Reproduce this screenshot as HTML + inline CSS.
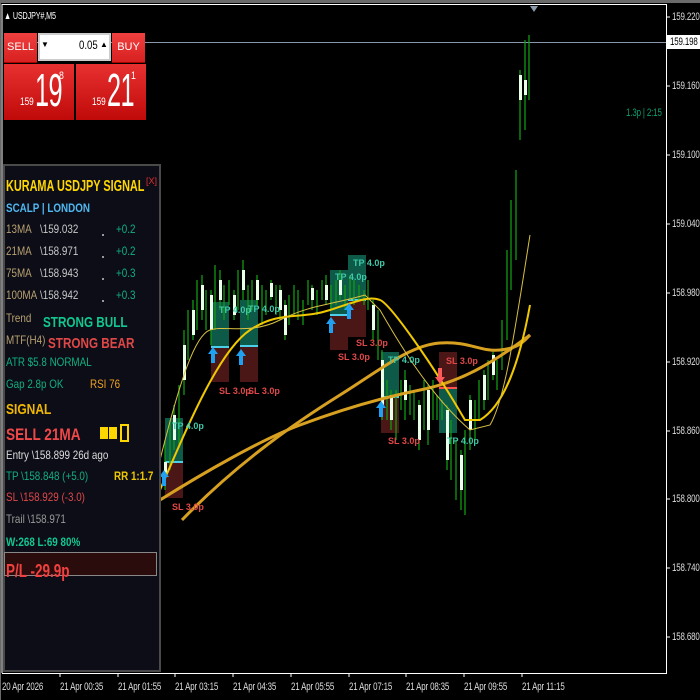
<!DOCTYPE html>
<html><head><meta charset="utf-8"><style>
*{margin:0;padding:0;box-sizing:border-box}
body{width:700px;height:700px;background:#000;overflow:hidden;position:relative;font-family:"Liberation Sans",sans-serif;}
.a{position:absolute;white-space:nowrap}
.ax{position:absolute;color:#ddd;font-size:11px;transform:scaleX(0.72);transform-origin:left top;letter-spacing:-0.2px}
.p{position:absolute;left:6px;font-size:12px;transform:scaleX(0.82);transform-origin:left top;white-space:nowrap}
</style></head><body>
<div class="a" style="left:0;top:0;width:700px;height:3px;background:#6a6a6a"></div>
<div class="a" style="left:0;top:3px;width:1px;height:697px;background:#6a6a6a"></div>
<svg class="a" style="left:0;top:0" width="700" height="700">
<line x1="2" y1="4.5" x2="667" y2="4.5" stroke="#fff"/>
<line x1="666.5" y1="4" x2="666.5" y2="673" stroke="#fff"/>
<line x1="2" y1="673.5" x2="667" y2="673.5" stroke="#fff"/>
<line x1="2" y1="4" x2="2" y2="673" stroke="#fff"/>
<polygon points="530,6 538,6 534,12" fill="#8a9aa8"/>
<line x1="4" y1="42.5" x2="666" y2="42.5" stroke="#8898a8"/>
<g stroke="#fff"><line x1="666" y1="17" x2="670" y2="17"/><line x1="666" y1="86" x2="670" y2="86"/><line x1="666" y1="155" x2="670" y2="155"/><line x1="666" y1="224" x2="670" y2="224"/><line x1="666" y1="293" x2="670" y2="293"/><line x1="666" y1="362" x2="670" y2="362"/><line x1="666" y1="431" x2="670" y2="431"/><line x1="666" y1="499" x2="670" y2="499"/><line x1="666" y1="568" x2="670" y2="568"/><line x1="666" y1="637" x2="670" y2="637"/>
<line x1="60" y1="673" x2="60" y2="677"/><line x1="118" y1="673" x2="118" y2="677"/><line x1="175" y1="673" x2="175" y2="677"/><line x1="233" y1="673" x2="233" y2="677"/><line x1="291" y1="673" x2="291" y2="677"/><line x1="349" y1="673" x2="349" y2="677"/><line x1="406" y1="673" x2="406" y2="677"/><line x1="464" y1="673" x2="464" y2="677"/><line x1="522" y1="673" x2="522" y2="677"/></g>
<g>
<rect x="165" y="418" width="18" height="44" fill="#0d5a48"/><rect x="165" y="462" width="18" height="36" fill="#4a1616"/>
<rect x="211" y="302" width="18" height="45" fill="#0d5a48"/><rect x="211" y="347" width="18" height="35" fill="#4a1616"/>
<rect x="240" y="300" width="18" height="46" fill="#0d5a48"/><rect x="240" y="346" width="18" height="36" fill="#4a1616"/>
<rect x="330" y="270" width="18" height="45" fill="#0d5a48"/><rect x="330" y="315" width="18" height="35" fill="#4a1616"/>
<rect x="348" y="255" width="18" height="45" fill="#0d5a48"/><rect x="348" y="300" width="18" height="37" fill="#4a1616"/>
<rect x="381" y="352" width="18" height="45" fill="#0d5a48"/><rect x="381" y="397" width="18" height="36" fill="#4a1616"/>
<rect x="439" y="352" width="18" height="36" fill="#4a1616"/><rect x="439" y="388" width="18" height="45" fill="#0d5a48"/>
<g stroke="#4ad0e8" stroke-width="2"><line x1="165" y1="462" x2="183" y2="462"/><line x1="211" y1="347" x2="229" y2="347"/><line x1="240" y1="346" x2="258" y2="346"/><line x1="330" y1="315" x2="348" y2="315"/><line x1="348" y1="300" x2="366" y2="300"/><line x1="381" y1="397" x2="399" y2="397"/></g>
<line x1="439" y1="388" x2="457" y2="388" stroke="#ff5050" stroke-width="2"/>
</g>
<path fill="none" stroke="#119a11" stroke-width="1.3" d="M165 440V490M170 420V470M174 405V450M179 385V445M184 330V395M188 310V360M193 300V340M197 280V330M202 275V320M206 290V330M211 290V345M215 265V330M220 270V310M224 285V320M229 280V305M234 290V320M238 270V310M243 260V300M248 285V320M252 280V310M257 275V305M262 285V325M266 290V315M271 280V300M276 285V315M280 285V320M285 300V340M289 295V325M294 285V315M298 290V320M303 300V325M308 280V305M312 285V310M317 290V315M322 280V300M326 275V305M331 285V310M336 280V305M340 270V300M345 285V310M350 275V300M354 280V305M359 285V300M364 290V305M368 280V310M373 300V340M378 310V360M382 350V420M387 380V420M391 390V430M396 390V440M401 380V410M405 370V420M410 385V415M414 390V420M419 400V450M424 380V430M428 385V445M433 380V420M437 395V420M442 400V420M447 405V470M451 420V480M456 440V500M461 450V510M465 430V515M470 395V450M475 400V440M479 380V420M484 370V410M488 360V400M493 350V380M497 360V390M502 320V370M507 250V340M511 200V290M516 170V260M520 70V140M525 40V130M529 35V100"/>
<g fill="#e8ffe8"><rect x="164" y="462" width="3" height="13"/><rect x="173" y="415" width="3" height="25"/><rect x="183" y="345" width="3" height="35"/><rect x="192" y="310" width="3" height="25"/><rect x="201" y="285" width="3" height="25"/><rect x="210" y="295" width="3" height="35"/><rect x="219" y="280" width="3" height="20"/><rect x="233" y="295" width="3" height="20"/><rect x="242" y="270" width="3" height="20"/><rect x="256" y="280" width="3" height="20"/><rect x="270" y="283" width="3" height="14"/><rect x="279" y="290" width="3" height="20"/><rect x="284" y="305" width="3" height="30"/><rect x="311" y="288" width="3" height="12"/><rect x="325" y="285" width="3" height="15"/><rect x="339" y="280" width="3" height="15"/><rect x="372" y="305" width="3" height="25"/><rect x="381" y="360" width="3" height="45"/><rect x="390" y="395" width="3" height="25"/><rect x="404" y="380" width="3" height="20"/><rect x="418" y="405" width="3" height="35"/><rect x="427" y="390" width="3" height="40"/><rect x="446" y="410" width="3" height="50"/><rect x="460" y="455" width="3" height="35"/><rect x="469" y="400" width="3" height="30"/><rect x="483" y="375" width="3" height="25"/><rect x="492" y="355" width="3" height="20"/><rect x="519" y="75" width="3" height="25"/><rect x="524" y="80" width="3" height="15"/></g>
<path d="M160 500 C200 475,260 440,300 425 S380 398,420 390 S490 365,530 335" fill="none" stroke="#d8a020" stroke-width="3"/>
<path d="M182 520 C240 460,300 420,340 395 S410 345,440 343 S480 352,500 350 S525 340,530 335" fill="none" stroke="#d8a020" stroke-width="3"/>
<path d="M160 490 C190 420,220 350,250 330 S300 320,330 310 S370 296,380 300 S430 360,465 420 L480 420 C505 405,520 360,530 305" fill="none" stroke="#f0c800" stroke-width="2"/>
<path d="M160 460 C180 380,195 335,210 330 S250 335,280 320 S330 305,365 295 L380 310 C400 345,430 395,470 430 L490 425 C505 400,515 330,530 235" fill="none" stroke="#d8c040" stroke-width="1"/>
<g fill="#20a0f0"><path d="M164 470 l5 7 h-3 v9 h-4 v-9 h-3z"/><path d="M213 347 l5 7 h-3 v9 h-4 v-9 h-3z"/><path d="M241 349 l5 7 h-3 v9 h-4 v-9 h-3z"/><path d="M331 317 l5 7 h-3 v9 h-4 v-9 h-3z"/><path d="M349 303 l5 7 h-3 v9 h-4 v-9 h-3z"/><path d="M381 401 l5 7 h-3 v9 h-4 v-9 h-3z"/></g>
<path d="M440 384 l5 -7 h-3 v-9 h-4 v9 h-3z" fill="#ff5a5a"/>
<g font-family="Liberation Sans" font-size="9" font-weight="bold">
<g fill="#40c8a8"><text x="172" y="429">TP 4.0p</text><text x="219" y="313">TP 4.0p</text><text x="248" y="312">TP 4.0p</text><text x="335" y="280">TP 4.0p</text><text x="353" y="266">TP 4.0p</text><text x="388" y="363">TP 4.0p</text><text x="447" y="444">TP 4.0p</text></g>
<g fill="#e04848"><text x="172" y="510">SL 3.0p</text><text x="219" y="394">SL 3.0p</text><text x="248" y="394">SL 3.0p</text><text x="338" y="360">SL 3.0p</text><text x="356" y="346">SL 3.0p</text><text x="388" y="444">SL 3.0p</text><text x="446" y="364">SL 3.0p</text></g>
</g>
</svg>
<div class="ax" style="left:672px;top:11px">159.220</div>
<div class="a" style="left:667px;top:35px;width:33px;height:14px;background:#fff"></div>
<div class="ax" style="left:670px;top:36px;color:#000">159.198</div>
<div class="ax" style="left:672px;top:80px">159.160</div>
<div class="ax" style="left:672px;top:149px">159.100</div>
<div class="ax" style="left:672px;top:218px">159.040</div>
<div class="ax" style="left:672px;top:287px">158.980</div>
<div class="ax" style="left:672px;top:356px">158.920</div>
<div class="ax" style="left:672px;top:425px">158.860</div>
<div class="ax" style="left:672px;top:493px">158.800</div>
<div class="ax" style="left:672px;top:562px">158.740</div>
<div class="ax" style="left:672px;top:631px">158.680</div>
<div class="ax" style="left:2px;top:681px">20 Apr 2026</div>
<div class="ax" style="left:60px;top:681px">21 Apr 00:35</div>
<div class="ax" style="left:118px;top:681px">21 Apr 01:55</div>
<div class="ax" style="left:175px;top:681px">21 Apr 03:15</div>
<div class="ax" style="left:233px;top:681px">21 Apr 04:35</div>
<div class="ax" style="left:291px;top:681px">21 Apr 05:55</div>
<div class="ax" style="left:349px;top:681px">21 Apr 07:15</div>
<div class="ax" style="left:406px;top:681px">21 Apr 08:35</div>
<div class="ax" style="left:464px;top:681px">21 Apr 09:55</div>
<div class="ax" style="left:522px;top:681px">21 Apr 11:15</div>
<div class="ax" style="left:626px;top:107px;color:#10a070">1.3p | 2:15</div>
<div class="ax" style="left:4px;top:11px;color:#fff;font-size:10px">▲ USDJPY#,M5</div>
<div class="a" style="left:4px;top:33px;width:33px;height:30px;background:linear-gradient(#f04040,#d82020);color:#fff;font-size:11px;text-align:center;line-height:28px;border-bottom:1px solid #a00">SELL</div>
<div class="a" style="left:38px;top:33px;width:73px;height:28px;background:#fff;border:2px solid #ccc"></div>
<div class="a" style="left:41px;top:40px;font-size:8px;color:#000">▼</div>
<div class="a" style="left:100px;top:40px;font-size:8px;color:#000">▲</div>
<div class="a" style="left:79px;top:38px;font-size:12px;color:#000;transform:scaleX(.8);transform-origin:left">0.05</div>
<div class="a" style="left:112px;top:33px;width:33px;height:30px;background:linear-gradient(#f04040,#d82020);color:#fff;font-size:11px;text-align:center;line-height:28px;border-bottom:1px solid #a00">BUY</div>
<div class="a" style="left:4px;top:64px;width:70px;height:56px;background:linear-gradient(#e83030,#c00a0a)"></div>
<div class="a" style="left:76px;top:64px;width:70px;height:56px;background:linear-gradient(#e83030,#c00a0a)"></div>
<div class="a" style="left:20px;top:96px;color:#fff;font-size:11px;transform:scaleX(.75);transform-origin:left">159</div>
<div class="a" style="left:35px;top:66px;color:#fff;font-size:46px;line-height:48px;transform:scaleX(.55);transform-origin:left;letter-spacing:-1px">19</div>
<div class="a" style="left:59px;top:70px;color:#fff;font-size:11px;transform:scaleX(.8);transform-origin:left">8</div>
<div class="a" style="left:92px;top:96px;color:#fff;font-size:11px;transform:scaleX(.75);transform-origin:left">159</div>
<div class="a" style="left:107px;top:66px;color:#fff;font-size:46px;line-height:48px;transform:scaleX(.55);transform-origin:left;letter-spacing:-1px">21</div>
<div class="a" style="left:131px;top:70px;color:#fff;font-size:11px;transform:scaleX(.8);transform-origin:left">1</div>
<div class="a" style="left:3px;top:164px;width:158px;height:508px;background:#0c0d17;border:2px solid #4a4a4a"></div>
<div class="a" style="left:4px;top:552px;width:153px;height:24px;background:#2a0c0c;border:1px solid #888"></div>
<div class="p" style="top:178px;color:#ffd700;font-size:16px;font-weight:bold;transform:scaleX(.68)">KURAMA USDJPY SIGNAL</div>
<div class="a" style="left:146px;top:176px;color:#e03030;font-size:9px">[X]</div>
<div class="p" style="top:201px;color:#4fb8f0;font-weight:bold">SCALP | LONDON</div>
<div class="p" style="top:222px;color:#b8a070">13MA</div><div class="p" style="left:40px;top:222px;color:#c8c8c8">\159.032</div><div class="p" style="left:116px;top:222px;color:#10b080">+0.2</div>
<div class="p" style="top:244px;color:#b8a070">21MA</div><div class="p" style="left:40px;top:244px;color:#c8c8c8">\158.971</div><div class="p" style="left:116px;top:244px;color:#10b080">+0.2</div>
<div class="p" style="top:266px;color:#b8a070">75MA</div><div class="p" style="left:40px;top:266px;color:#c8c8c8">\158.943</div><div class="p" style="left:116px;top:266px;color:#10b080">+0.3</div>
<div class="p" style="top:288px;color:#b8a070">100MA</div><div class="p" style="left:40px;top:288px;color:#c8c8c8">\158.942</div><div class="p" style="left:116px;top:288px;color:#10b080">+0.3</div>
<div class="a" style="left:102px;top:234px;width:2px;height:2px;background:#999"></div><div class="a" style="left:102px;top:256px;width:2px;height:2px;background:#999"></div><div class="a" style="left:102px;top:278px;width:2px;height:2px;background:#999"></div><div class="a" style="left:102px;top:300px;width:2px;height:2px;background:#999"></div>
<div class="p" style="top:311px;color:#b8a070">Trend</div><div class="p" style="left:43px;top:314px;color:#10c890;font-size:15px;font-weight:bold;transform:scaleX(.78)">STRONG BULL</div>
<div class="p" style="top:333px;color:#b8a070">MTF(H4)</div><div class="p" style="left:48px;top:335px;color:#e04848;font-size:15px;font-weight:bold;transform:scaleX(.78)">STRONG BEAR</div>
<div class="p" style="top:355px;color:#10b080">ATR $5.8 NORMAL</div>
<div class="p" style="top:377px;color:#10b080">Gap 2.8p OK</div><div class="p" style="left:90px;top:377px;color:#f0a020">RSI 76</div>
<div class="p" style="top:401px;color:#f0b800;font-size:15px;font-weight:bold;transform:scaleX(.8)">SIGNAL</div>
<div class="p" style="top:425px;color:#f04848;font-size:17px;font-weight:bold;transform:scaleX(.8)">SELL  21MA</div>
<div class="a" style="left:100px;top:427px;width:8px;height:12px;background:#ffd700"></div><div class="a" style="left:109px;top:427px;width:8px;height:12px;background:#ffd700"></div><div class="a" style="left:120px;top:424px;width:9px;height:18px;border:2px solid #ffd700"></div>
<div class="p" style="top:448px;color:#ddd">Entry  \158.899   26d ago</div>
<div class="p" style="top:469px;color:#10b080">TP  \158.848  (+5.0)</div><div class="p" style="left:114px;top:469px;color:#f0c800;font-weight:bold">RR 1:1.7</div>
<div class="p" style="top:490px;color:#e04848">SL  \158.929  (-3.0)</div>
<div class="p" style="top:512px;color:#999">Trail  \158.971</div>
<div class="p" style="top:535px;color:#10c890;font-weight:bold">W:268 L:69  80%</div>
<div class="p" style="top:561px;color:#f04040;font-size:18px;font-weight:bold;transform:scaleX(.75)">P/L  -29.9p</div>
</body></html>
